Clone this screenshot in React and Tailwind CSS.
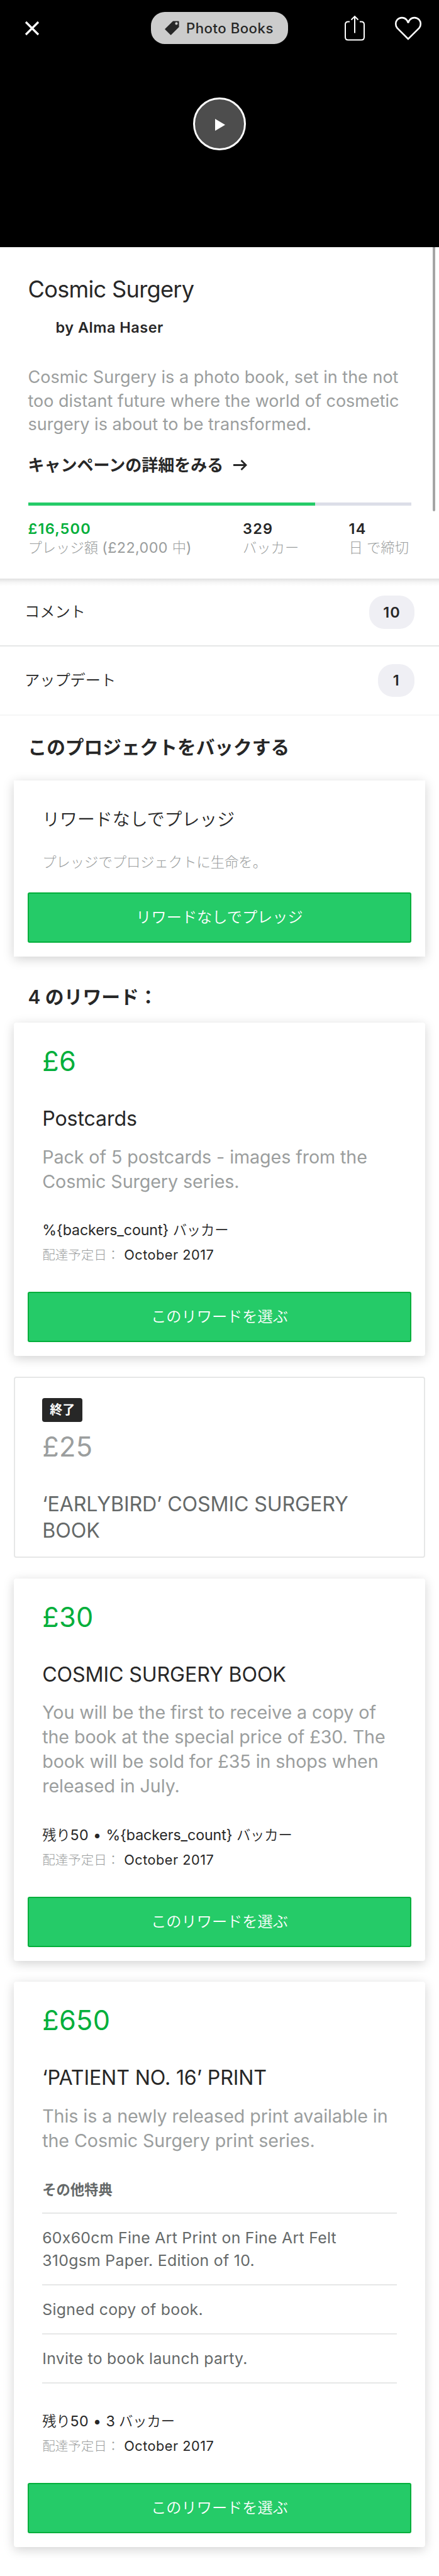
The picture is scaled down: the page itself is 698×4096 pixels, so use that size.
const SHADOW = "shadow-[0_4px_17px_rgba(0,0,0,0.18)]";

function Price({ children, className = "mt-[35px] text-[#03af3b]" }) {
  return (
    <div className={`text-[43.3px] leading-[52px] tracking-[0.3px] ${className}`}>{children}</div>
  );
}

function Title({ children, className = "mt-[44.7px] text-[#272727]" }) {
  return (
    <h3 className={`text-[32.2px] leading-[42.4px] tracking-[-0.15px] ${className}`}>{children}</h3>
  );
}

function Description({ children }) {
  return (
    <p className="mt-[19.1px] text-[28.7px] leading-[39.1px] tracking-[-0.1px] text-[#9b9e9e]">
      {children}
    </p>
  );
}

function Backers({ left, count, className = "mt-[43.4px]" }) {
  return (
    <div className={`h-[30px] text-[23.2px] leading-[30px] tracking-[-0.1px] whitespace-pre text-[#272727] ${className}`}>
      {left && (
        <>
          <span className="text-[22.3px] leading-none font-[350]">残り</span>
          <span className="tracking-[0.4px]">50 • </span>
        </>
      )}
      {count} <span className="text-[22.3px] leading-none font-[350]">バッカー</span>
    </div>
  );
}

function Delivery() {
  return (
    <div className="mt-[9.1px] h-[30px] text-[21.7px] leading-[30px] tracking-[0.5px] whitespace-pre text-[#272727]">
      <span className="mr-[7px] text-[20.5px] leading-none font-light tracking-[0px] text-[#9b9e9e]">配達予定日：</span>
      October 2017
    </div>
  );
}

function Button({ children }) {
  return (
    <button className="mx-[22.2px] mt-auto flex h-[80px] shrink-0 items-center justify-center rounded-[3px] border-2 border-[#03af3b] bg-[#25cb68] text-[24.2px] font-[350] text-white">
      {children}
    </button>
  );
}

function Card({ children, action, className }) {
  return (
    <article className={`mx-[22.3px] flex flex-col bg-white pb-[22.3px] ${SHADOW} ${className}`}>
      <div className="px-[44.9px]">{children}</div>
      <Button>{action}</Button>
    </article>
  );
}

function CountRow({ label, count, className }) {
  return (
    <div className={`flex items-center justify-between pr-[39.2px] pl-[39px] ${className}`}>
      <span className="text-[24.2px] font-[350]">{label}</span>
      <span className="flex h-[52.3px] min-w-[57.4px] items-center justify-center rounded-[24px] bg-[#efeff4] px-[22px] text-[23.5px] font-semibold tracking-[1px]">
        {count}
      </span>
    </div>
  );
}

function Stat({ value, label, className }) {
  return (
    <div className={className}>
      <div className="h-[30px] text-[23.5px] leading-[30px] font-semibold tracking-[1.2px]">{value}</div>
      <div className="h-[30px] text-[22.3px] leading-[30px] font-light whitespace-pre text-[#9b9e9e]">{label}</div>
    </div>
  );
}

function Hero() {
  return (
    <header className="flex h-[393px] flex-col items-center bg-black">
      <div className="grid h-[89px] w-full grid-cols-[1fr_auto_1fr] items-center pr-[27.5px] pl-[38.5px] text-white">
        <svg className="h-[24px] w-[24px]" viewBox="0 0 24 24" fill="none" stroke="currentColor" strokeWidth="3.2">
          <path d="M2 2 22 22M22 2 2 22" />
        </svg>
        <div className="ml-[-11px] flex h-[50.3px] w-[218px] items-center rounded-[22px] bg-[#cccccc] pl-[22px] text-[#272727]">
          <svg className="h-[23px] w-[23px] shrink-0" viewBox="0 0 24 24" fill="currentColor">
            <path
              fillRule="evenodd"
              d="M13.6 .4h9q1 0 1 1V10.400L10.700 23.300q-.7.700-1.400 0L.6 14.600q-.700-.700 0-1.400ZM19.300 2.400a2.200 2.200 0 1 0 0 4.400 2.200 2.200 0 0 0 0-4.400Z"
            />
          </svg>
          <span className="ml-[11px] text-[22.2px] font-medium tracking-[0.5px] whitespace-nowrap">Photo Books</span>
        </div>
        <div className="flex items-center justify-end gap-[46px]">
          <svg className="h-[41px] w-[34px]" viewBox="0 0 34 41" fill="none" stroke="currentColor" strokeWidth="2">
            <path d="M9 10.500H6.500Q2 10.500 2 15v20q0 4.500 4.500 4.500h21q4.500 0 4.500-4.500V15q0-4.500-4.500-4.500H25M17 28.500V2.500M11.500 7.500 17 2.200l5.500 5.300" />
          </svg>
          <svg className="h-[38px] w-[44px]" viewBox="0 0 44 38" fill="none" stroke="currentColor" strokeWidth="2.600">
            <path d="M22 36 4.600 18.600C1.200 14.500 1.600 8.800 4.800 5.200 8.800 1.100 15.200 1.100 19 5Q21.200 7.200 22 10.400 22.800 7.200 25 5C28.800 1.100 35.200 1.100 39.200 5.200 42.400 8.800 42.800 14.500 39.400 18.600Z" />
          </svg>
        </div>
      </div>
      <div className="mt-[65.500px] flex h-[84.600px] w-[84.600px] items-center justify-center rounded-full border-[3.700px] border-white bg-[#4d4d4d]">
        <svg className="mt-[3px] ml-[1px] h-[19px] w-[16px]" viewBox="0 0 16 19" fill="#fff">
          <path d="M0 0 16 9.500 0 19Z" />
        </svg>
      </div>
    </header>
  );
}

const PERKS = [
  "60x60cm Fine Art Print on Fine Art Felt 310gsm Paper. Edition of 10.",
  "Signed copy of book.",
  "Invite to book launch party.",
];

export default function App() {
  return (
    <div
      lang="ja"
      className="relative h-[4096px] w-full overflow-hidden bg-white font-['Inter','Noto_Sans_CJK_JP',sans-serif] text-[#272727] [font-feature-settings:'calt'_0]"
    >
      <Hero />
      <div className="absolute top-[393px] right-[5.800px] h-[420px] w-[4.200px] rounded-b-full bg-[#a5a5a5]" />

      <section className="h-[526.700px] px-[44.500px] pt-[44.700px]">
        <h1 className="text-[36.200px] leading-[44px] tracking-[-0.720px]">Cosmic Surgery</h1>
        <div className="mt-[24.500px] ml-[44px] text-[23.500px] leading-[30px] font-semibold tracking-[0.500px]">
          by Alma Haser
        </div>
        <p className="mt-[45px] text-[27px] leading-[37.360px] text-[#9b9e9e]">
          Cosmic Surgery is a photo book, set in the not too distant future where the world of cosmetic
          surgery is about to be transformed.
        </p>
        <div className="mt-[28.700px] flex h-[36px] items-center text-[26px] leading-[36px] font-semibold">
          <span>キャンペーンの詳細をみる</span>
          <svg className="ml-[16px] h-[17px] w-[22px]" viewBox="0 0 22 17" fill="none" stroke="currentColor" strokeWidth="2.800">
            <path d="M0 8.500H20M12.500 1 20 8.500 12.500 16" />
          </svg>
        </div>
        <div className="mt-[40.700px] h-[5.600px] bg-[#dcdee8]">
          <div className="h-full w-3/4 bg-[#25cb68]" />
        </div>
        <div className="mt-[22.200px] flex whitespace-nowrap">
          <Stat
            className="w-[341.500px] shrink-0"
            value={<span className="text-[#03af3b]">£16,500</span>}
            label={
              <>
                プレッジ額 <span className="text-[23.300px] leading-none font-normal tracking-[0.400px]">(£22,000 </span>中
                <span className="text-[23.300px] leading-none font-normal">)</span>
              </>
            }
          />
          <Stat className="w-[168.500px] shrink-0" value="329" label="バッカー" />
          <Stat value="14" label="日 で締切" />
        </div>
      </section>

      <CountRow
        className="h-[108px] border-b-2 border-[#e6e7e7] bg-[linear-gradient(#e0e0e0,#f6f6f6_6px,#ffffff_12px)] pt-[1.500px]"
        label="コメント"
        count="10"
      />
      <CountRow className="h-[110px] border-b-2 border-[#f5f6f6]" label="アップデート" count="1" />

      <h2 className="mt-[30px] ml-[44.500px] text-[29.700px] leading-[40px] font-semibold">
        このプロジェクトをバックする
      </h2>
      <Card className="mt-[33.100px] h-[280.200px]" action="リワードなしでプレッジ">
        <h3 className="mt-[42.400px] text-[27.900px] leading-[40px] font-[350]">リワードなしでプレッジ</h3>
        <p className="mt-[32.400px] text-[22.300px] leading-[30px] font-light text-[#9b9e9e]">
          プレッジでプロジェクトに生命を。
        </p>
      </Card>

      <h2 className="mt-[43.800px] ml-[44.500px] text-[29.800px] leading-[40px] font-semibold">4 のリワード：</h2>

      <Card className="mt-[21.600px] h-[529.600px] rounded-[4px]" action="このリワードを選ぶ">
        <Price>£6</Price>
        <Title>Postcards</Title>
        <Description>
          Pack of 5 postcards - images from the
          <br />
          Cosmic Surgery series.
        </Description>
        <Backers count="%{backers_count}" />
        <Delivery />
      </Card>

      <article className="mx-[22.300px] mt-[33.500px] h-[287.600px] rounded-[4px] border-2 border-[#e6e7e7] px-[43px]">
        <div className="mt-[31.200px] flex h-[38.300px] w-[64.100px] items-center justify-center rounded-[4px] bg-[#272727] text-[20px] font-semibold text-white">
          終了
        </div>
        <Price className="mt-[12.600px] text-[#9b9e9e]">£25</Price>
        <Title className="mt-[45px] text-[#656969]">‘EARLYBIRD’ COSMIC SURGERY BOOK</Title>
      </article>

      <Card className="mt-[32.800px] h-[608.600px] rounded-[4px]" action="このリワードを選ぶ">
        <Price>£30</Price>
        <Title>COSMIC SURGERY BOOK</Title>
        <Description>
          You will be the first to receive a copy of
          <br />
          the book at the special price of £30. The
          <br />
          book will be sold for £35 in shops when
          <br />
          released in July.
        </Description>
        <Backers left count="%{backers_count}" />
        <Delivery />
      </Card>

      <Card className="mt-[32.900px] h-[898.700px] rounded-[4px]" action="このリワードを選ぶ">
        <Price>£650</Price>
        <Title>‘PATIENT NO. 16’ PRINT</Title>
        <Description>
          This is a newly released print available in
          <br />
          the Cosmic Surgery print series.
        </Description>
        <h4 className="mt-[44.200px] text-[22.300px] leading-[30px] font-semibold text-[#656969]">その他特典</h4>
        <ul className="mt-[21.300px] border-t-2 border-[#e6e7e7] text-[24.800px] leading-[35.500px] tracking-[0.300px] text-[#656969]">
          {PERKS.map((perk) => (
            <li key={perk} className="border-b-2 border-[#e6e7e7] pt-[21.300px] pb-[19.400px]">
              {perk}
            </li>
          ))}
        </ul>
        <Backers left count="3" className="mt-[44.900px]" />
        <Delivery />
      </Card>
    </div>
  );
}
